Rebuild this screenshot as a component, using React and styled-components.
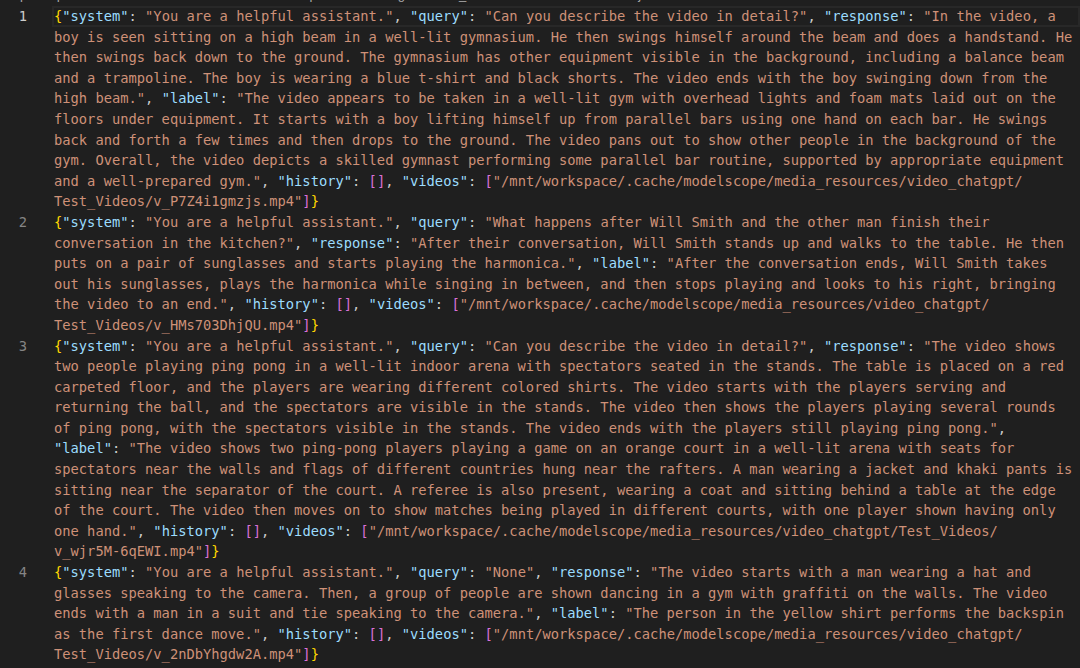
import React from 'react';
import styled, { createGlobalStyle } from 'styled-components';

const GlobalStyle = createGlobalStyle`
  html, body {
    margin: 0;
    padding: 0;
    background: #1f1f1f;
  }
  body {
    width: 1080px;
    height: 668px;
    overflow: hidden;
  }
`;

const Window = styled.div`
  width: 1080px;
  height: 668px;
  background: #1f1f1f;
  display: flex;
  flex-direction: column;
  overflow: hidden;
`;

const Breadcrumbs = styled.div`
  height: 6px;
  overflow: hidden;
  display: flex;
  align-items: flex-end;
  flex-shrink: 0;
`;

const Crumbs = styled.div`
  display: flex;
  align-items: center;
  gap: 5px;
  height: 22px;
  flex-shrink: 0;
  padding-left: 2px;
  transform: translateY(-1px);
  font-family: "Liberation Sans", Arial, sans-serif;
  font-size: 13px;
  color: #a9a9a9;
  white-space: nowrap;
`;

const Sep = styled.span`
  color: #8a8a8a;
`;

const JsonIcon = styled.span`
  color: #e8c34a;
  font-family: "DejaVu Sans Mono", monospace;
  font-weight: bold;
  font-size: 12px;
`;

const Editor = styled.div`
  flex: 1;
  display: flex;
  flex-direction: column;
  font-family: "DejaVu Sans Mono", "Liberation Mono", monospace;
  font-size: 13.75px;
  line-height: 20.6px;
`;

const Line = styled.div`
  display: flex;
`;

const Gutter = styled.div`
  width: 27px;
  padding-right: 25px;
  text-align: right;
  color: ${(p) => (p.$active ? '#cccccc' : '#858585')};
  flex-shrink: 0;
`;

const Rows = styled.div`
  flex: 1;
  display: flex;
  flex-direction: column;
`;

const Row = styled.div`
  height: 20.6px;
  padding-left: 2px;
  white-space: pre;
  box-shadow: ${(p) => (p.$active ? 'inset 0 0 0 2px #282828' : 'none')};
`;

const COLORS = {
  key: '#9cdcfe',
  str: '#ce9178',
  p: '#cccccc',
  b1: '#ffd700',
  b2: '#da70d6',
};

const Tok = styled.span`
  color: ${(p) => COLORS[p.$kind]};
`;

const LINES = [
  [
    '{"system": "You are a helpful assistant.", "query": "Can you describe the video in detail?", "response": "In the video, a',
    'boy is seen sitting on a high beam in a well-lit gymnasium. He then swings himself around the beam and does a handstand. He',
    'then swings back down to the ground. The gymnasium has other equipment visible in the background, including a balance beam',
    'and a trampoline. The boy is wearing a blue t-shirt and black shorts. The video ends with the boy swinging down from the',
    'high beam.", "label": "The video appears to be taken in a well-lit gym with overhead lights and foam mats laid out on the',
    'floors under equipment. It starts with a boy lifting himself up from parallel bars using one hand on each bar. He swings',
    'back and forth a few times and then drops to the ground. The video pans out to show other people in the background of the',
    'gym. Overall, the video depicts a skilled gymnast performing some parallel bar routine, supported by appropriate equipment',
    'and a well-prepared gym.", "history": [], "videos": ["/mnt/workspace/.cache/modelscope/media_resources/video_chatgpt/',
    'Test_Videos/v_P7Z4i1gmzjs.mp4"]}',
  ],
  [
    '{"system": "You are a helpful assistant.", "query": "What happens after Will Smith and the other man finish their',
    'conversation in the kitchen?", "response": "After their conversation, Will Smith stands up and walks to the table. He then',
    'puts on a pair of sunglasses and starts playing the harmonica.", "label": "After the conversation ends, Will Smith takes',
    'out his sunglasses, plays the harmonica while singing in between, and then stops playing and looks to his right, bringing',
    'the video to an end.", "history": [], "videos": ["/mnt/workspace/.cache/modelscope/media_resources/video_chatgpt/',
    'Test_Videos/v_HMs703DhjQU.mp4"]}',
  ],
  [
    '{"system": "You are a helpful assistant.", "query": "Can you describe the video in detail?", "response": "The video shows',
    'two people playing ping pong in a well-lit indoor arena with spectators seated in the stands. The table is placed on a red',
    'carpeted floor, and the players are wearing different colored shirts. The video starts with the players serving and',
    'returning the ball, and the spectators are visible in the stands. The video then shows the players playing several rounds',
    'of ping pong, with the spectators visible in the stands. The video ends with the players still playing ping pong.",',
    '"label": "The video shows two ping-pong players playing a game on an orange court in a well-lit arena with seats for',
    'spectators near the walls and flags of different countries hung near the rafters. A man wearing a jacket and khaki pants is',
    'sitting near the separator of the court. A referee is also present, wearing a coat and sitting behind a table at the edge',
    'of the court. The video then moves on to show matches being played in different courts, with one player shown having only',
    'one hand.", "history": [], "videos": ["/mnt/workspace/.cache/modelscope/media_resources/video_chatgpt/Test_Videos/',
    'v_wjr5M-6qEWI.mp4"]}',
  ],
  [
    '{"system": "You are a helpful assistant.", "query": "None", "response": "The video starts with a man wearing a hat and',
    'glasses speaking to the camera. Then, a group of people are shown dancing in a gym with graffiti on the walls. The video',
    'ends with a man in a suit and tie speaking to the camera.", "label": "The person in the yellow shirt performs the backspin',
    'as the first dance move.", "history": [], "videos": ["/mnt/workspace/.cache/modelscope/media_resources/video_chatgpt/',
    'Test_Videos/v_2nDbYhgdw2A.mp4"]}',
  ],
];

// colour every char of a wrapped json line, then cut it back into rows
function tokenize(rows) {
  const src = rows.join('\n');
  const kinds = new Array(src.length).fill('p');
  let depth = 0;
  let i = 0;
  while (i < src.length) {
    const c = src[i];
    if (c === '"') {
      let j = i + 1;
      while (j < src.length && src[j] !== '"') {
        if (src[j] === '\\') j++;
        j++;
      }
      let k = j + 1;
      while (k < src.length && /\s/.test(src[k])) k++;
      const kind = src[k] === ':' ? 'key' : 'str';
      for (let x = i; x <= j; x++) kinds[x] = kind;
      i = j + 1;
      continue;
    }
    if (c === '{' || c === '[') {
      kinds[i] = depth % 2 === 0 ? 'b1' : 'b2';
      depth++;
    } else if (c === '}' || c === ']') {
      depth--;
      kinds[i] = depth % 2 === 0 ? 'b1' : 'b2';
    }
    i++;
  }
  const out = [];
  let start = 0;
  rows.forEach((r) => {
    const segs = [];
    for (let x = start; x < start + r.length; x++) {
      const last = segs[segs.length - 1];
      if (last && last.kind === kinds[x]) last.text += src[x];
      else segs.push({ kind: kinds[x], text: src[x] });
    }
    out.push(segs);
    start += r.length + 1;
  });
  return out;
}

const App = () => {
  return (
    <Window>
      <GlobalStyle />
      <Breadcrumbs>
        <Crumbs>
          <span>output</span>
          <Sep>›</Sep>
          <span>qwen-vl-chat</span>
          <Sep>›</Sep>
          <span>v2-20240111-115457</span>
          <Sep>›</Sep>
          <span>checkpoint-1200-merged</span>
          <Sep>›</Sep>
          <span>infer_result</span>
          <Sep>›</Sep>
          <JsonIcon>{'{}'}</JsonIcon>
          <span>20240111-115051.jsonl</span>
        </Crumbs>
      </Breadcrumbs>
      <Editor>
        {LINES.map((rows, li) => (
          <Line key={li}>
            <Gutter $active={li === 0}>{li + 1}</Gutter>
            <Rows>
              {tokenize(rows).map((segs, ri) => (
                <Row key={ri} $active={li === 0 && ri === 0}>
                  {segs.map((s, si) => (
                    <Tok key={si} $kind={s.kind}>
                      {s.text}
                    </Tok>
                  ))}
                </Row>
              ))}
            </Rows>
          </Line>
        ))}
      </Editor>
    </Window>
  );
};

export default App;
